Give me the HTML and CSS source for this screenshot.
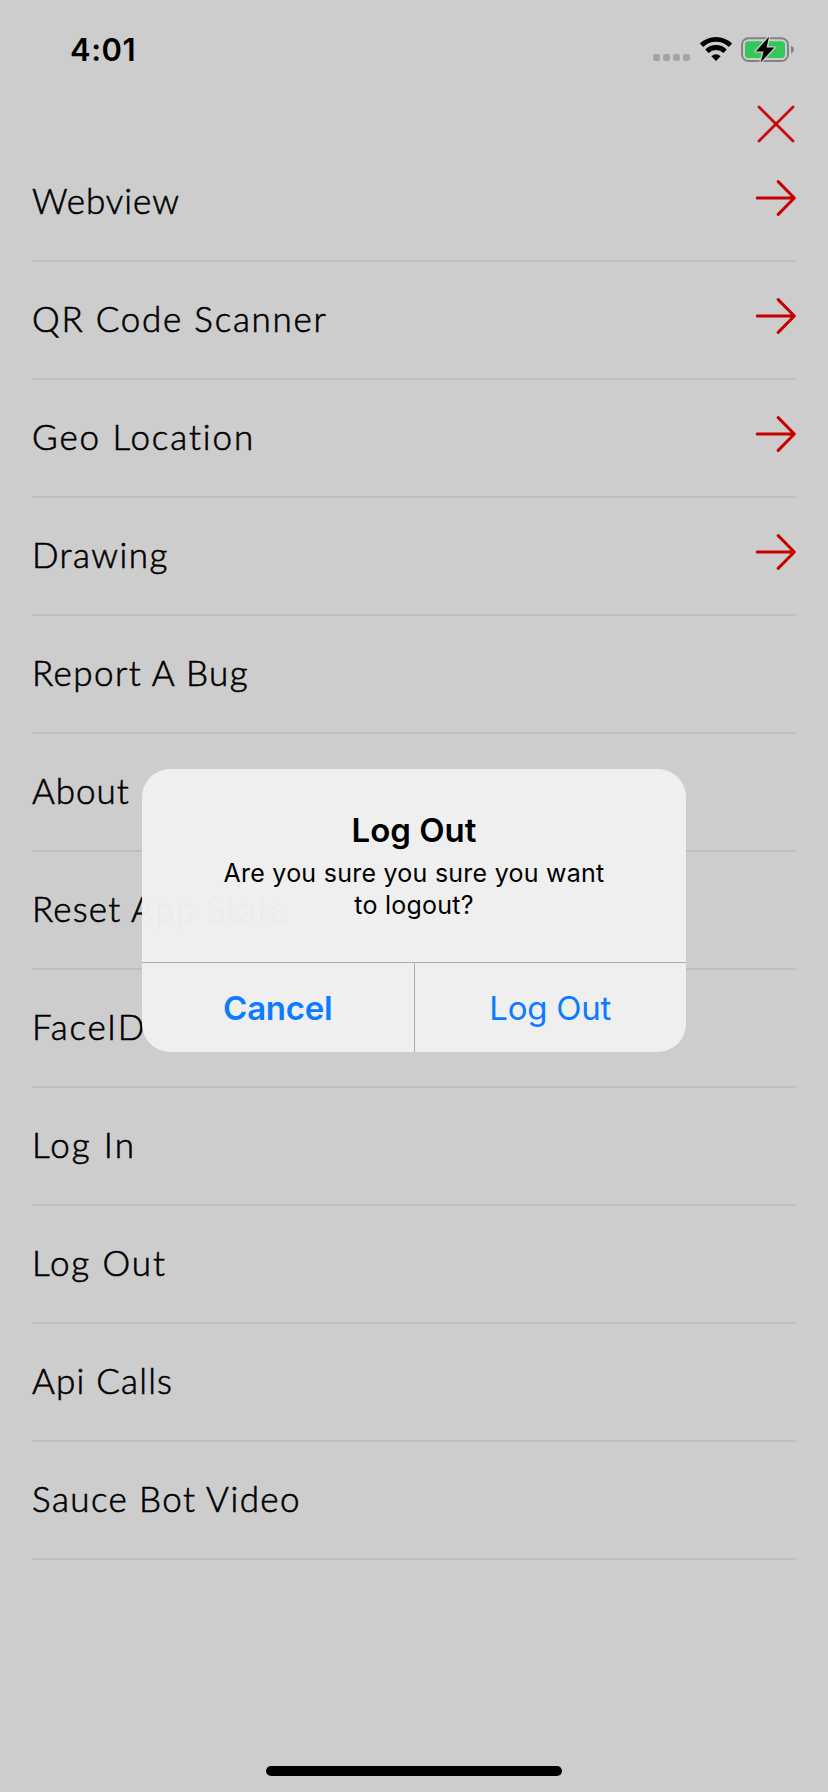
FILE: index.html
```
<!DOCTYPE html>
<html lang="en">
<head>
<meta charset="utf-8">
<meta name="viewport" content="width=device-width">
<title>Menu</title>
<link rel="stylesheet" href="styles.css">
</head>
<body>
<svg class="defs" aria-hidden="true">
  <symbol id="arrow" viewBox="0 0 42 38">
    <path d="M2.2 19H38.5M23.2 2.6L39.3 19L23.2 35.4" fill="none" stroke="#c80000" stroke-width="3" stroke-linecap="round" stroke-linejoin="round"/>
  </symbol>
</svg>
<div class="screen">
  <header class="status">
    <span class="time">4:01</span>
    <div class="indicators">
      <div class="cellular"><i></i><i></i><i></i><i></i></div>
      <svg class="wifi" width="34" height="26" viewBox="0 0 34 26">
        <g fill="none" stroke="#000" stroke-width="4.8">
          <path d="M2.5 9.3A20.6 20.6 0 0 1 31.5 9.3"/>
          <path d="M7.9 15.2A13 13 0 0 1 26.1 15.2"/>
        </g>
        <path d="M17 25L12.4 20.3Q17 16 21.6 20.3Z"/>
      </svg>
      <svg class="battery" width="54" height="28" viewBox="0 0 54 28">
        <rect x="1" y="2.2" width="46" height="22.8" rx="6.5" fill="none" stroke="#838383" stroke-width="2"/>
        <path d="M50 9.8Q53 11 53 13.6T50 17.4Z" fill="#838383"/>
        <rect x="4" y="5.2" width="40" height="16.8" rx="3.5" fill="#34c759"/>
        <path d="M28 .8L14.8 15.4H22.6L19.6 26.4L33.4 11.6H25.6Z" fill="#000" stroke="#cdcdcd" stroke-width="2.6" stroke-linejoin="round" paint-order="stroke"/>
      </svg>
    </div>
  </header>
  <div class="close-bar">
    <svg width="38" height="38" viewBox="0 0 38 38"><path d="M2 2L36 36M36 2L2 36" fill="none" stroke="#cb0b0b" stroke-width="2.8" stroke-linecap="round"/></svg>
  </div>
  <ul class="menu">
    <li class="item snug"><span>Webview</span><svg class="arrow"><use href="#arrow"/></svg></li>
    <li class="item wide"><span>QR Code Scanner</span><svg class="arrow"><use href="#arrow"/></svg></li>
    <li class="item wider"><span>Geo Location</span><svg class="arrow"><use href="#arrow"/></svg></li>
    <li class="item medium"><span>Drawing</span><svg class="arrow"><use href="#arrow"/></svg></li>
    <li class="item medium"><span>Report A Bug</span></li>
    <li class="item snug"><span>About</span></li>
    <li class="item normal"><span>Reset App State</span></li>
    <li class="item wide"><span>FaceID</span></li>
    <li class="item widest"><span>Log In</span></li>
    <li class="item wider"><span>Log Out</span></li>
    <li class="item normal"><span>Api Calls</span></li>
    <li class="item medium"><span>Sauce Bot Video</span></li>
  </ul>
  <div class="home"></div>
  <div class="overlay">
    <section class="alert" role="alertdialog">
      <div class="alert-body">
        <h1>Log Out</h1>
        <p>Are you sure you sure you want<br>to logout?</p>
      </div>
      <div class="actions">
        <button class="cancel">Cancel</button>
        <button class="confirm">Log Out</button>
      </div>
    </section>
  </div>
</div>
</body>
</html>
```

FILE: styles.css
```
* { box-sizing: border-box; }
body { margin: 0; background: #cdcdcd; color: #000; }
.defs { display: none; }
.screen {
  position: relative;
  width: 828px;
  height: 1792px;
  display: flex;
  flex-direction: column;
  align-items: stretch;
  font-family: Inter, "Liberation Sans", sans-serif;
}
.status {
  height: 98px;
  display: flex;
  justify-content: space-between;
  align-items: flex-start;
  padding: 31px 33px 0 70px;
}
.time { font-size: 31px; font-weight: 600; line-height: 38px; letter-spacing: .5px; }
.indicators { display: flex; padding-top: 5px; }
.cellular { display: flex; gap: 3px; padding-top: 18px; margin-right: 9px; }
.cellular i { width: 7px; height: 7px; border-radius: 2px; background: #a4a4a4; }
.wifi { margin-right: 8px; }
.close-bar { height: 46px; display: flex; justify-content: flex-end; padding: 7px 33px 0 0; }
.menu { list-style: none; margin: 0; padding: 0 32px; }
.item {
  height: 118px;
  display: flex;
  justify-content: space-between;
  align-items: flex-start;
  padding-top: 35px;
  border-bottom: 2px solid #bebebf;
  font: 300 35px/42px Lato, "Open Sans", sans-serif;
  -webkit-text-stroke: .6px #000;
}
.snug { letter-spacing: .95px; }
.normal { letter-spacing: 1.2px; }
.medium { letter-spacing: 1.42px; }
.wide { letter-spacing: 1.75px; }
.wider { letter-spacing: 1.92px; }
.widest { letter-spacing: 2.2px; }
.arrow { width: 42px; height: 38px; margin-right: -1px; }
.home {
  width: 296px;
  height: 10px;
  margin: auto auto 16px;
  border-radius: 5px;
  background: #000;
}
.overlay {
  position: absolute;
  inset: 0;
  display: flex;
  justify-content: center;
  padding-top: 769px;
}
.alert {
  width: 544px;
  height: 283px;
  display: flex;
  flex-direction: column;
  overflow: hidden;
  border-radius: 28px;
  background: rgba(240, 240, 240, .98);
}
.alert-body { height: 193px; padding-top: 41px; text-align: center; }
h1 { margin: 0; font-size: 33px; font-weight: 600; line-height: 40px; }
p { margin: 7px 0 0; font-size: 25px; line-height: 32px; letter-spacing: .25px; }
.actions { flex: 1; display: flex; border-top: 1px solid #adadad; }
button {
  flex: 1;
  padding: 0;
  border: 0;
  background: none;
  color: #0b7cff;
  font: 400 33px/40px Inter, "Liberation Sans", sans-serif;
  letter-spacing: -.25px;
}
.cancel { font-weight: 600; }
.confirm { border-left: 1px solid #adadad; }
```
